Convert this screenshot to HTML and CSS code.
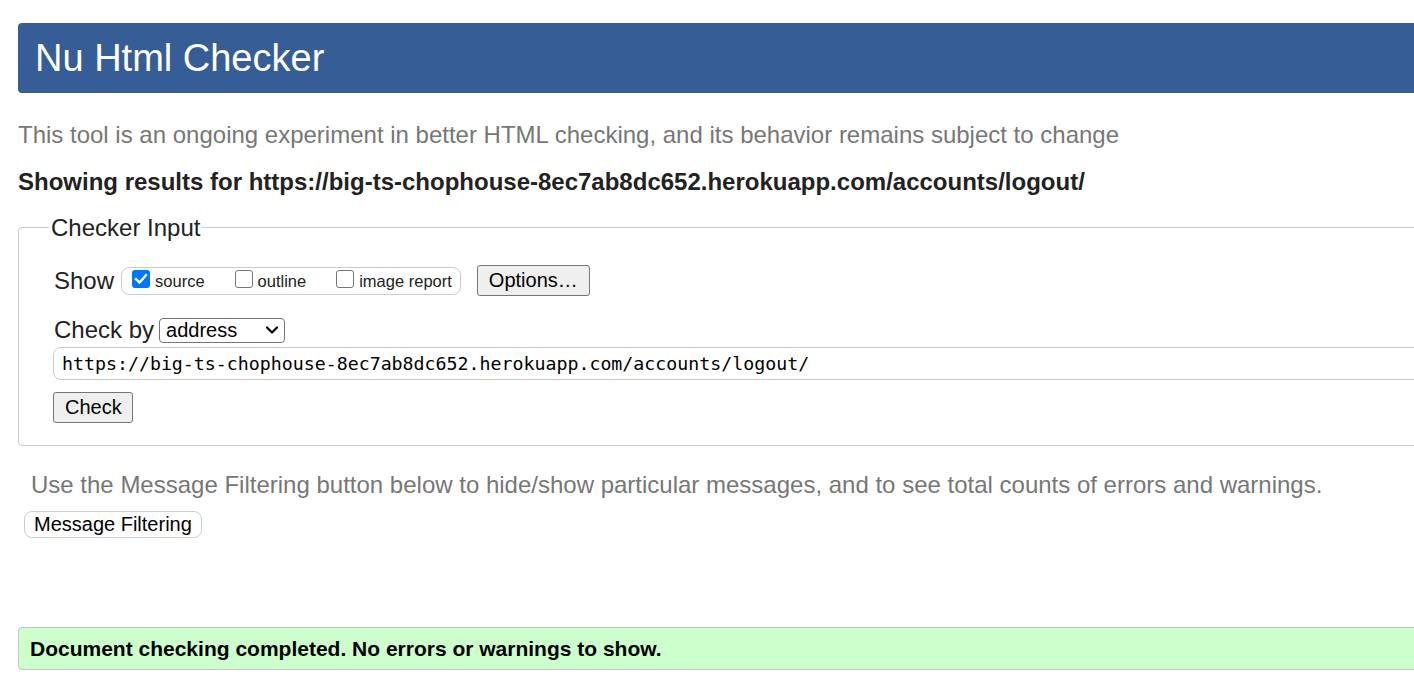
FILE: index.html
```html
<!DOCTYPE html>
<html lang="en">
<head>
<meta charset="utf-8">
<title>Nu Html Checker</title>
<link rel="stylesheet" href="styles.css">
</head>
<body>
<div class="page">
  <h1 class="banner">Nu Html Checker</h1>
  <p class="intro">This tool is an ongoing experiment in better HTML checking, and its behavior remains subject to change</p>
  <p class="results">Showing results for https://big-ts-chophouse-8ec7ab8dc652.herokuapp.com/accounts/logout/</p>
  <fieldset class="input-box">
    <legend class="legend">Checker Input</legend>
    <div class="row show-row">
      <span class="label">Show</span>
      <span class="group"><label class="opt"><span class="cb checked"><svg width="18" height="18" viewBox="0 0 18 18"><path d="M4 9.2 L7.6 12.6 L14 5.2" fill="none" stroke="#fff" stroke-width="2.4" stroke-linecap="square" stroke-linejoin="miter"/></svg></span>source</label><label class="opt"><span class="cb"></span>outline</label><label class="opt"><span class="cb"></span>image report</label></span>
      <button class="btn options">Options…</button>
    </div>
    <div class="row by-row">
      <span class="label">Check by</span>
      <span class="select">
        <span class="select-text">address</span>
        <svg class="chev" width="14" height="10" viewBox="0 0 14 10"><path d="M2 2.5 L7 7.5 L12 2.5" fill="none" stroke="#000" stroke-width="2.2" stroke-linecap="round" stroke-linejoin="round"/></svg>
      </span>
    </div>
    <div class="url">https://big-ts-chophouse-8ec7ab8dc652.herokuapp.com/accounts/logout/</div>
    <button class="btn check">Check</button>
  </fieldset>
  <p class="hint">Use the Message Filtering button below to hide/show particular messages, and to see total counts of errors and warnings.</p>
  <button class="filter">Message Filtering</button>
  <div class="success">Document checking completed. No errors or warnings to show.</div>
</div>
</body>
</html>
```
FILE: styles.css
```css
html, body {
  margin: 0;
  padding: 0;
  overflow: hidden;
  background: #fff;
}
body {
  font-family: "Liberation Sans", Arial, sans-serif;
  font-size: 24px;
  color: #222;
}
.page {
  width: 1600px;
  padding: 23px 0 0 18px;
}
.banner {
  margin: 0;
  height: 70px;
  line-height: 70px;
  padding-left: 17px;
  background: #365d95;
  color: #fff;
  font-size: 38px;
  font-weight: normal;
  border-radius: 4px;
}
.intro {
  margin: 27px 0 0;
  line-height: 29px;
  color: #777;
}
.results {
  margin: 18px 0 0;
  line-height: 29px;
  font-weight: bold;
  font-size: 24px;
  color: #222;
}
.input-box {
  margin: 17px 0 0;
  padding: 0 0 22px 35px;
  border: 1px solid #ccc;
  border-radius: 4px;
}
.legend {
  margin-left: -5px;
  padding: 0 2px;
  line-height: 29px;
  color: #222;
}
.row {
  display: flex;
  align-items: center;
}
.show-row {
  margin-top: 23px;
  height: 31px;
}
.label {
  margin-right: 7px;
  color: #222;
}
.group {
  display: inline-flex;
  align-items: baseline;
  height: 26px;
  line-height: 26px;
  padding: 0 8px 0 10px;
  border: 1px solid #ccc;
  border-radius: 8px;
  font-size: 16.5px;
  color: #222;
}
.opt {
  margin-right: 30px;
  white-space: nowrap;
}
.opt:last-child {
  margin-right: 0;
}
.cb {
  display: inline-block;
  box-sizing: border-box;
  width: 18px;
  height: 18px;
  margin: 0 5px 0 0;
  vertical-align: -1px;
  border: 1.5px solid #767676;
  border-radius: 3px;
  background: #fff;
}
.cb.checked {
  border: none;
  background: #0075ff;
}
.cb svg {
  display: block;
}
.btn {
  font-family: "Liberation Sans", Arial, sans-serif;
  font-size: 20px;
  color: #000;
  background: #efefef;
  border: 1px solid #767676;
  border-radius: 3px;
  height: 31px;
  padding: 0 11px;
}
.options {
  margin-left: 16px;
}
.by-row {
  margin-top: 21px;
  height: 26px;
}
.label + .select {
  margin-left: -2px;
}
.select {
  display: inline-flex;
  align-items: center;
  justify-content: space-between;
  box-sizing: border-box;
  width: 126px;
  height: 25px;
  padding: 0 5px 0 6px;
  border: 1px solid #767676;
  border-radius: 4px;
  font-size: 20px;
  color: #000;
}
.url {
  margin-top: 4px;
  margin-left: -1px;
  height: 31px;
  line-height: 31px;
  padding-left: 8px;
  border: 1px solid #ccc;
  border-radius: 8px;
  font-family: "DejaVu Sans Mono", monospace;
  font-size: 18.25px;
  color: #000;
}
.check {
  display: block;
  margin: 12px 0 0 -1px;
  width: 80px;
}
.hint {
  margin: 24px 0 0 13px;
  line-height: 29px;
  color: #777;
}
.filter {
  display: block;
  margin: 12px 0 0 6px;
  height: 27px;
  padding: 0 9px;
  font-family: "Liberation Sans", Arial, sans-serif;
  font-size: 20px;
  color: #000;
  background: #fff;
  border: 1px solid #ccc;
  border-radius: 8px;
}
.success {
  margin-top: 89px;
  height: 41px;
  line-height: 41px;
  padding-left: 11px;
  background: #ccffcc;
  border: 1px solid #c3c3c3;
  border-radius: 4px;
  font-weight: bold;
  font-size: 21px;
  color: #000;
}
```
